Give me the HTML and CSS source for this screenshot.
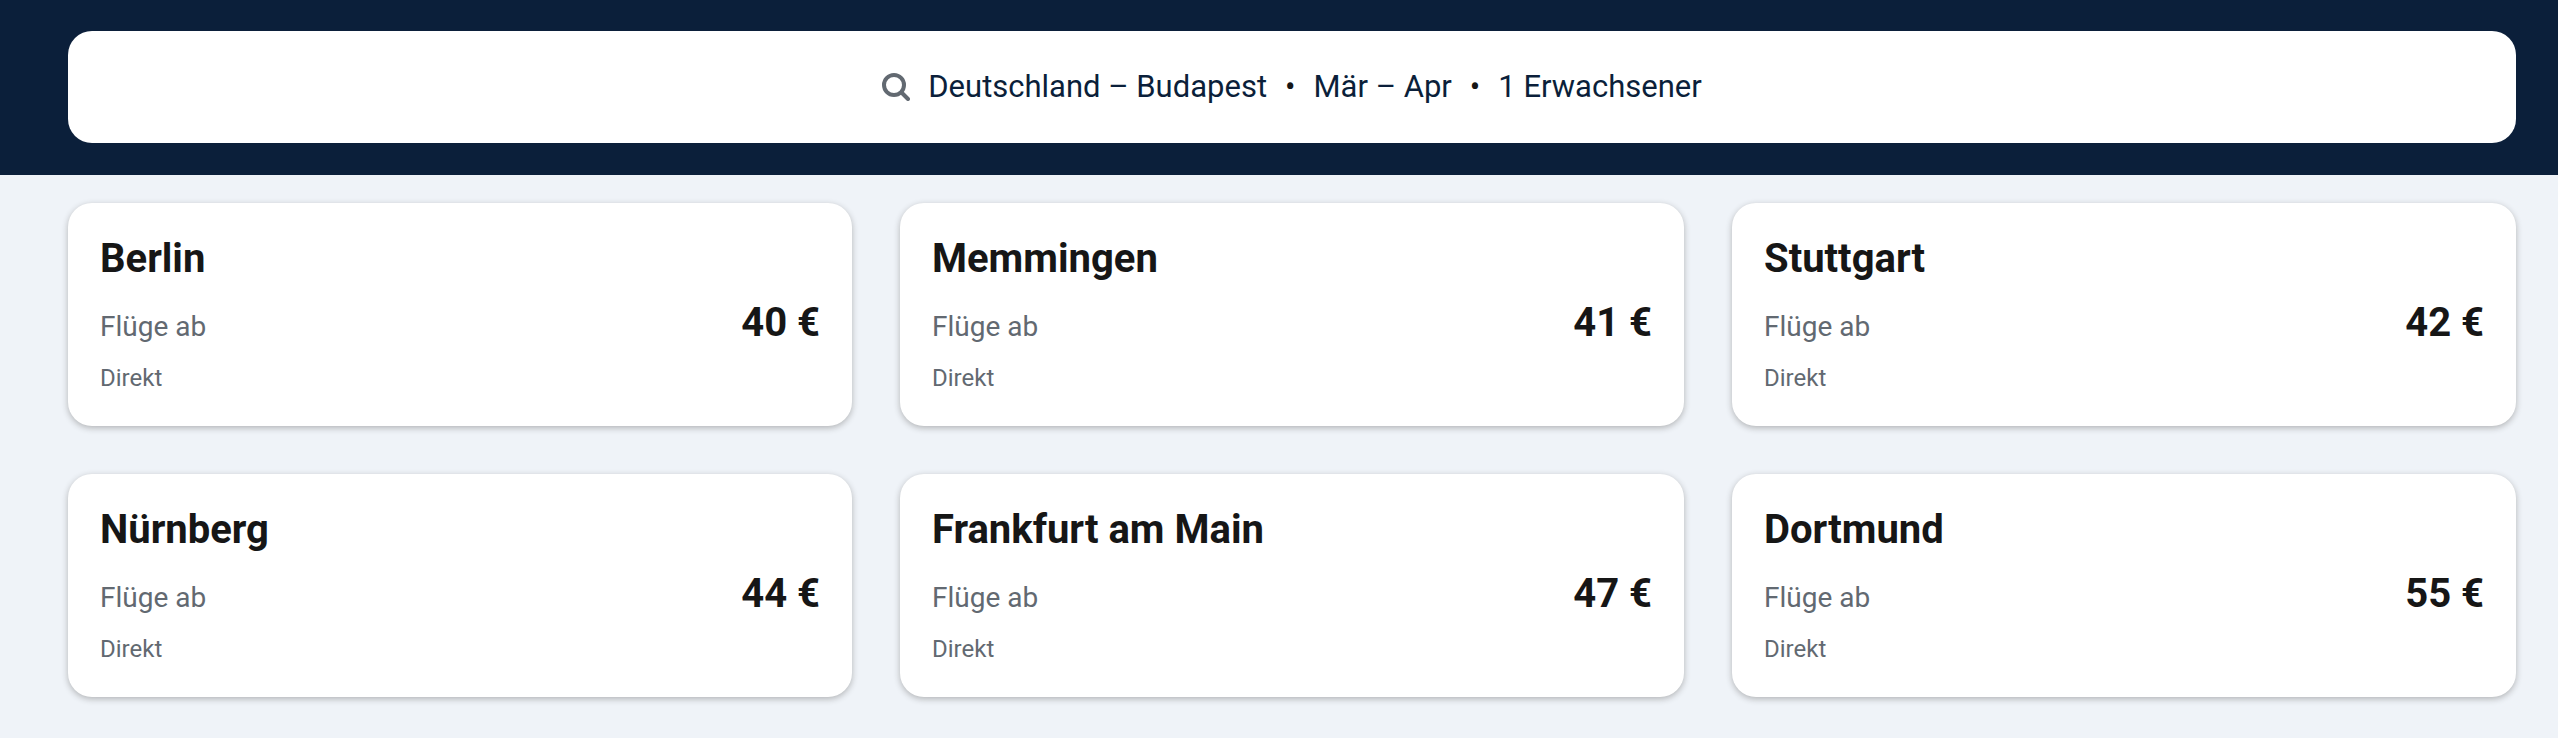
FILE: index.html
```html
<!DOCTYPE html>
<html lang="de">
<head>
<meta charset="utf-8">
<meta name="viewport" content="width=device-width, initial-scale=1">
<title>Flüge Deutschland – Budapest</title>
<link rel="stylesheet" href="styles.css">
</head>
<body>
<header class="header">
  <button class="search" type="button">
    <svg class="search-icon" viewBox="0 0 28 28" aria-hidden="true"><circle cx="12" cy="12" r="10"/><path d="M19.5 19.5 26 26"/></svg>
    <span>Deutschland – Budapest</span>
    <span class="dot">•</span>
    <span>Mär – Apr</span>
    <span class="dot">•</span>
    <span>1 Erwachsener</span>
  </button>
</header>
<main class="results">
  <a class="card" href="#berlin">
    <h2 class="city">Berlin</h2>
    <div class="fare"><span class="label">Flüge ab</span><span class="price">40 €</span></div>
    <p class="stops">Direkt</p>
  </a>
  <a class="card" href="#memmingen">
    <h2 class="city">Memmingen</h2>
    <div class="fare"><span class="label">Flüge ab</span><span class="price">41 €</span></div>
    <p class="stops">Direkt</p>
  </a>
  <a class="card" href="#stuttgart">
    <h2 class="city">Stuttgart</h2>
    <div class="fare"><span class="label">Flüge ab</span><span class="price">42 €</span></div>
    <p class="stops">Direkt</p>
  </a>
  <a class="card" href="#nuernberg">
    <h2 class="city">Nürnberg</h2>
    <div class="fare"><span class="label">Flüge ab</span><span class="price">44 €</span></div>
    <p class="stops">Direkt</p>
  </a>
  <a class="card" href="#frankfurt">
    <h2 class="city">Frankfurt am Main</h2>
    <div class="fare"><span class="label">Flüge ab</span><span class="price">47 €</span></div>
    <p class="stops">Direkt</p>
  </a>
  <a class="card" href="#dortmund">
    <h2 class="city">Dortmund</h2>
    <div class="fare"><span class="label">Flüge ab</span><span class="price">55 €</span></div>
    <p class="stops">Direkt</p>
  </a>
</main>
</body>
</html>
```

FILE: styles.css
```css
* {
  box-sizing: border-box;
}

body {
  margin: 0;
  background: #eff3f8;
  color: #161616;
  font-family: Roboto, "Liberation Sans", sans-serif;
}

.header {
  padding: 31px 42px 32px 68px;
  background: #0b1f3a;
}

.search {
  display: flex;
  align-items: center;
  justify-content: center;
  gap: 18px;
  width: 100%;
  padding: 36px 32px;
  border: 0;
  border-radius: 24px;
  background: #fff;
  color: #0b1f3a;
  font: 400 31px/40px Roboto, "Liberation Sans", sans-serif;
  cursor: pointer;
}

.search-icon {
  width: 28px;
  height: 28px;
  fill: none;
  stroke: #626971;
  stroke-width: 4;
  stroke-linecap: round;
}

.dot {
  color: #161616;
}

.results {
  display: grid;
  grid-template-columns: repeat(3, 1fr);
  gap: 48px;
  padding: 28px 42px 36px 68px;
}

.card {
  display: flex;
  flex-direction: column;
  padding: 32px;
  border-radius: 24px;
  background: #fff;
  box-shadow: 0 2px 6px rgba(37, 32, 31, 0.3);
  color: inherit;
  text-decoration: none;
}

.city {
  margin: 0;
  font-size: 40px;
  font-weight: 700;
  line-height: 48px;
}

.fare {
  display: flex;
  align-items: baseline;
  justify-content: space-between;
  margin: 16px 0 15px;
}

.label {
  color: #626971;
  font-size: 28px;
  line-height: 32px;
}

.price {
  font-size: 40px;
  font-weight: 700;
  line-height: 48px;
}

.stops {
  margin: 0;
  color: #626971;
  font-size: 24px;
  line-height: 32px;
}
```
